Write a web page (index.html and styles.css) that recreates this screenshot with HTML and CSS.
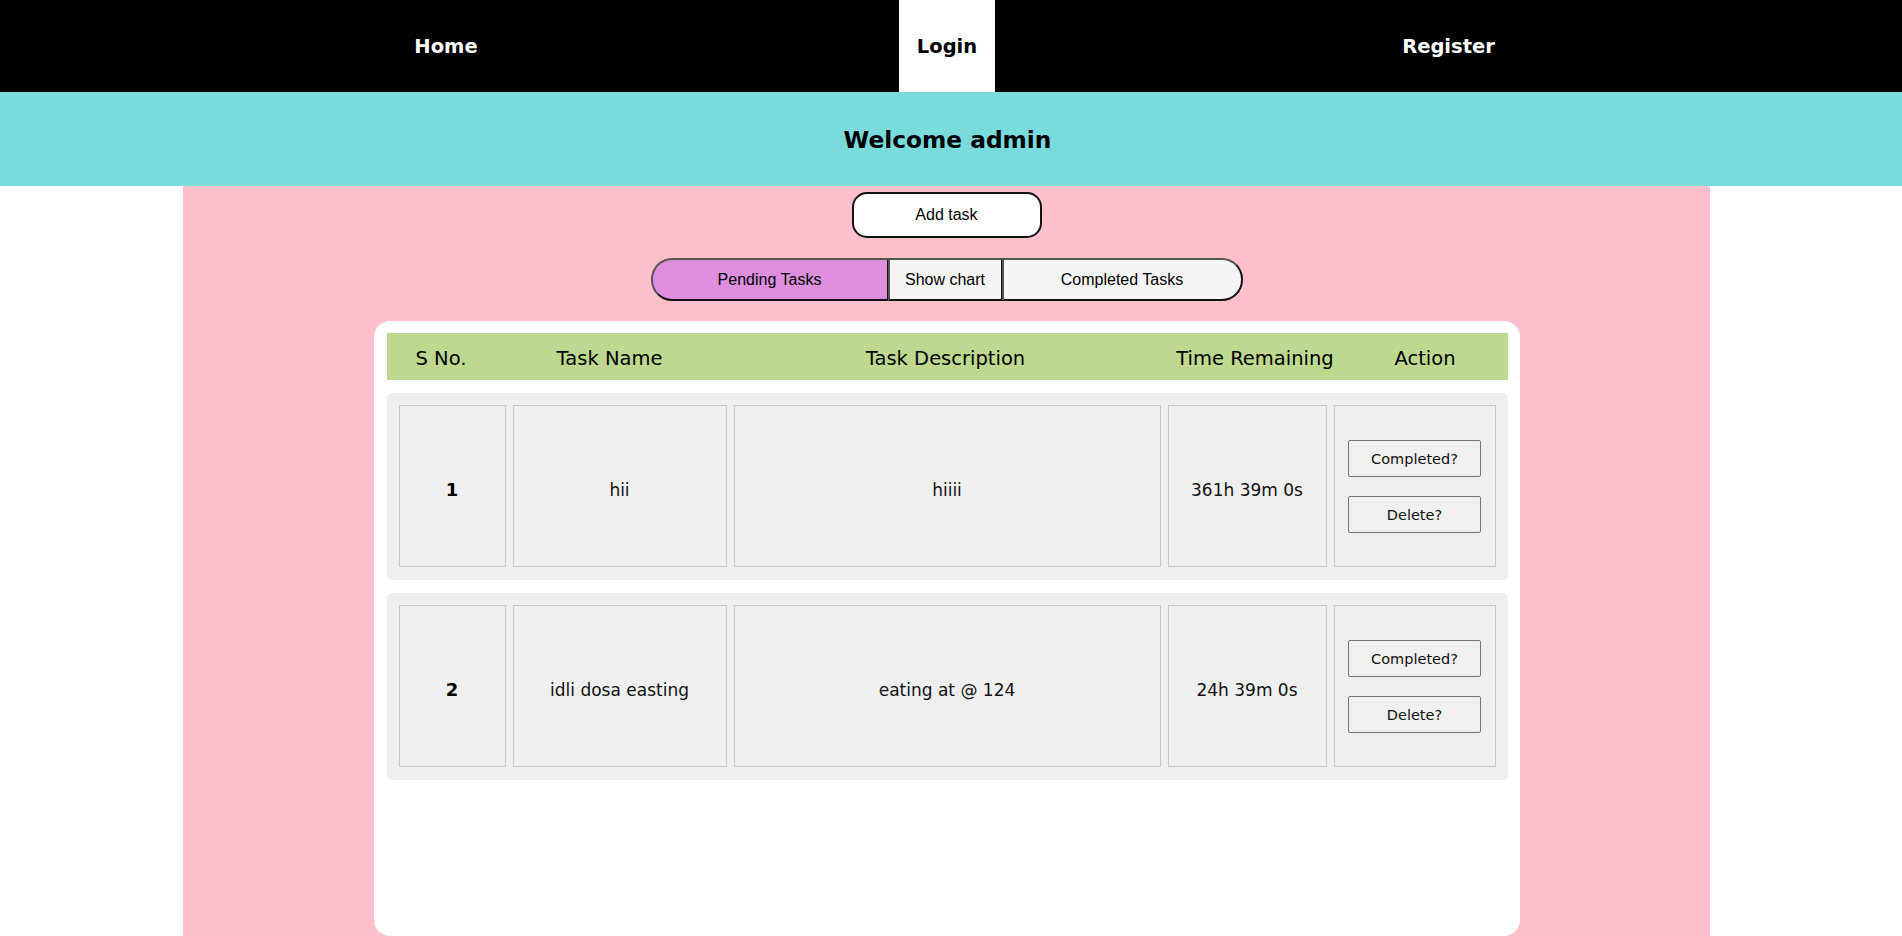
FILE: index.html
```html
<!DOCTYPE html>
<html lang="en">
<head>
<meta charset="utf-8">
<title>Tasks</title>
<link rel="stylesheet" href="styles.css">
</head>
<body>
<nav class="nav">
  <a class="nav-link home" href="#">Home</a>
  <a class="nav-link active" href="#">Login</a>
  <a class="nav-link" href="#">Register</a>
</nav>
<header class="welcome">Welcome admin</header>
<main class="page">
  <button class="add-btn">Add task</button>
  <div class="tabs">
    <button class="tab tab-first active">Pending Tasks</button>
    <button class="tab tab-mid">Show chart</button>
    <button class="tab tab-last">Completed Tasks</button>
  </div>
  <section class="card">
    <div class="thead">
      <div>S No.</div>
      <div>Task Name</div>
      <div>Task Description</div>
      <div>Time Remaining</div>
      <div>Action</div>
    </div>
    <div class="row">
      <div class="cell num">1</div>
      <div class="cell">hii</div>
      <div class="cell">hiiii</div>
      <div class="cell">361h 39m 0s</div>
      <div class="cell actions">
        <button class="act-btn">Completed?</button>
        <button class="act-btn">Delete?</button>
      </div>
    </div>
    <div class="row">
      <div class="cell num">2</div>
      <div class="cell">idli dosa easting</div>
      <div class="cell">eating at @ 124</div>
      <div class="cell">24h 39m 0s</div>
      <div class="cell actions">
        <button class="act-btn">Completed?</button>
        <button class="act-btn">Delete?</button>
      </div>
    </div>
  </section>
</main>
</body>
</html>
```

FILE: styles.css
```css
html, body {
  margin: 0;
  padding: 0;
  background: #ffffff;
  font-family: "DejaVu Sans", Verdana, sans-serif;
  color: #000;
  overflow: hidden;
}

.nav {
  display: grid;
  grid-template-columns: 899px 96px 1fr;
  height: 92px;
  background: #000;
}

.nav-link {
  display: flex;
  align-items: center;
  justify-content: center;
  color: #fff;
  text-decoration: none;
  font-weight: bold;
  font-size: 19.5px;
}

.nav-link.home {
  padding-right: 7px;
}

.nav-link.active {
  background: #fff;
  color: #000;
}

.welcome {
  height: 94px;
  background: #79dbdb;
  display: flex;
  align-items: center;
  justify-content: center;
  padding-right: 7px;
  font-weight: bold;
  font-size: 23.3px;
}

.page {
  margin-left: 183px;
  width: 1527px;
  height: 750px;
  background: #ffc0cb;
  display: flex;
  flex-direction: column;
  align-items: center;
}

.add-btn {
  margin-top: 6px;
  width: 190px;
  height: 46px;
  border: 2px solid #111;
  border-radius: 15px;
  background: #fff;
  font-family: "Liberation Sans", Arial, sans-serif;
  font-size: 16px;
  color: #000;
  padding: 0;
}

.tabs {
  margin-top: 20px;
  display: flex;
  height: 43px;
}

.tab {
  height: 43px;
  border: 2px solid;
  border-color: #555 #111 #111 #555;
  background: #f5f5f5;
  font-family: "Liberation Sans", Arial, sans-serif;
  font-size: 16px;
  color: #000;
  padding: 0;
  margin: 0;
}

.tab.active {
  background: #dd8fde;
}

.tab-first {
  width: 238px;
  border-radius: 21px 0 0 21px;
}

.tab-mid {
  width: 115px;
  margin-left: -1px;
}

.tab-last {
  width: 241px;
  margin-left: -1px;
  border-radius: 0 21px 21px 0;
}

.card {
  margin-top: 20px;
  width: 1146px;
  height: 615px;
  box-sizing: border-box;
  background: #fff;
  border-radius: 16px;
  padding: 12px 12px 0 13px;
  display: flex;
  flex-direction: column;
  gap: 13px;
}

.thead {
  display: grid;
  grid-template-columns: 109px 228px 444px 175px 1fr;
  height: 47px;
  box-sizing: border-box;
  padding-top: 4px;
  background: #bfd88f;
  align-items: center;
  text-align: center;
  font-size: 19.5px;
}

.row {
  display: grid;
  grid-template-columns: 107px 214px 427px 159px 1fr;
  grid-auto-rows: 162px;
  column-gap: 7px;
  padding: 12px 12px 13px 12px;
  background: #efefef;
  border-radius: 5px;
}

.cell {
  border: 1px solid #c9c9c9;
  display: flex;
  align-items: center;
  justify-content: center;
  padding-top: 7px;
  font-size: 17px;
  color: #111;
}

.cell.num {
  font-weight: bold;
  font-size: 18px;
  color: #000;
}

.cell.actions {
  flex-direction: column;
  gap: 19px;
  padding-top: 1px;
}

.act-btn {
  width: 133px;
  height: 37px;
  border: 1px solid #767676;
  border-radius: 2px;
  background: #f0f0f0;
  font-family: "DejaVu Sans", Verdana, sans-serif;
  font-size: 14.5px;
  color: #111;
  padding: 0;
}
```
